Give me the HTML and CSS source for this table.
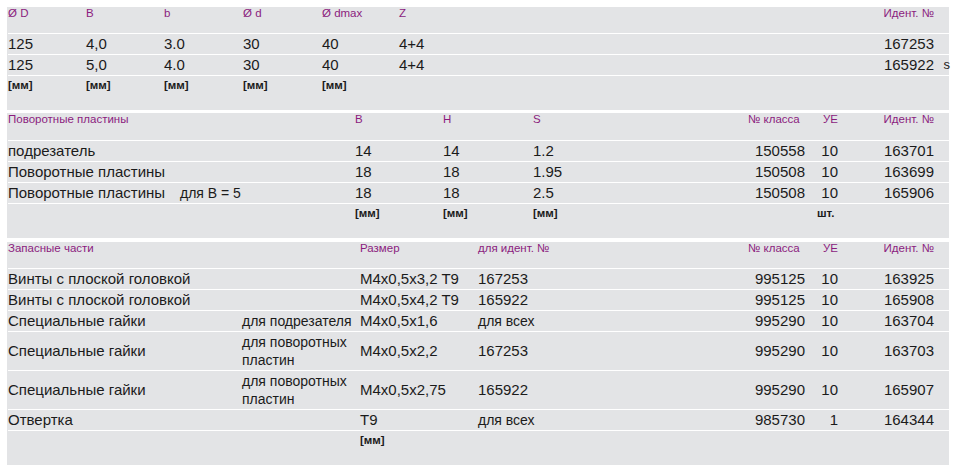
FILE: index.html
```html
<!DOCTYPE html>
<html lang="ru">
<head>
<meta charset="utf-8">
<title>Таблица</title>
<link rel="stylesheet" href="styles.css">
</head>
<body>
<div class="sheet">
  <div class="table t1">
    <div class="row head">
      <div>Ø D</div><div>B</div><div>b</div><div>Ø d</div><div>Ø dmax</div><div>Z</div><div class="id">Идент. №</div>
    </div>
    <div class="row data">
      <div>125</div><div>4,0</div><div>3.0</div><div>30</div><div>40</div><div>4+4</div><div class="id">167253</div>
    </div>
    <div class="row data">
      <div>125</div><div>5,0</div><div>4.0</div><div>30</div><div>40</div><div>4+4</div><div class="id mk">165922<span class="mark">s</span></div>
    </div>
    <div class="row units">
      <div>[мм]</div><div>[мм]</div><div>[мм]</div><div>[мм]</div><div>[мм]</div><div></div><div></div>
    </div>
  </div>

  <div class="table t2">
    <div class="row head">
      <div class="span2">Поворотные пластины</div><div>B</div><div>H</div><div>S</div><div class="cls-h">№ класса</div><div class="ue">УЕ</div><div class="id">Идент. №</div>
    </div>
    <div class="row data">
      <div>подрезатель</div><div></div><div>14</div><div>14</div><div>1.2</div><div class="cls">150558</div><div class="ue">10</div><div class="id">163701</div>
    </div>
    <div class="row data">
      <div>Поворотные пластины</div><div></div><div>18</div><div>18</div><div>1.95</div><div class="cls">150508</div><div class="ue">10</div><div class="id">163699</div>
    </div>
    <div class="row data">
      <div>Поворотные пластины</div><div class="note">для B = 5</div><div>18</div><div>18</div><div>2.5</div><div class="cls">150508</div><div class="ue">10</div><div class="id">165906</div>
    </div>
    <div class="row units">
      <div></div><div></div><div>[мм]</div><div>[мм]</div><div>[мм]</div><div></div><div class="pcs">шт.</div><div></div>
    </div>
  </div>

  <div class="table t3">
    <div class="row head">
      <div class="span2">Запасные части</div><div>Размер</div><div>для идент. №</div><div class="cls-h">№ класса</div><div class="ue">УЕ</div><div class="id">Идент. №</div>
    </div>
    <div class="row data">
      <div>Винты с плоской головкой</div><div></div><div>M4x0,5x3,2 T9</div><div>167253</div><div class="cls">995125</div><div class="ue">10</div><div class="id">163925</div>
    </div>
    <div class="row data">
      <div>Винты с плоской головкой</div><div></div><div>M4x0,5x4,2 T9</div><div>165922</div><div class="cls">995125</div><div class="ue">10</div><div class="id">165908</div>
    </div>
    <div class="row data">
      <div>Специальные гайки</div><div class="note">для подрезателя</div><div>M4x0,5x1,6</div><div class="note">для всех</div><div class="cls">995290</div><div class="ue">10</div><div class="id">163704</div>
    </div>
    <div class="row data tall">
      <div>Специальные гайки</div><div class="note">для поворотных пластин</div><div>M4x0,5x2,2</div><div>167253</div><div class="cls">995290</div><div class="ue">10</div><div class="id">163703</div>
    </div>
    <div class="row data tall">
      <div>Специальные гайки</div><div class="note">для поворотных пластин</div><div>M4x0,5x2,75</div><div>165922</div><div class="cls">995290</div><div class="ue">10</div><div class="id">165907</div>
    </div>
    <div class="row data">
      <div>Отвертка</div><div></div><div>T9</div><div class="note">для всех</div><div class="cls">985730</div><div class="ue">1</div><div class="id">164344</div>
    </div>
    <div class="row units">
      <div></div><div></div><div>[мм]</div><div></div><div></div><div></div><div></div>
    </div>
  </div>
</div>
</body>
</html>
```

FILE: styles.css
```css
* {
  box-sizing: border-box;
}

body {
  margin: 0;
  background: #ffffff;
  font-family: "Liberation Sans", Arial, sans-serif;
  color: #1b1b1b;
}

.sheet {
  width: 949px;
  padding: 7px 0 0 7px;
  display: flex;
  flex-direction: column;
}

.table {
  background: #e3e4e6;
  padding-left: 1px;
}

.t1 {
  margin-bottom: 3px;
}

.t2 {
  margin-bottom: 4px;
}

.row {
  display: grid;
  border-bottom: 1px solid #ffffff;
}

.t1 .row {
  grid-template-columns: 78px 78px 79px 79px 77px 1fr 109px;
}

.t2 .row {
  grid-template-columns: 172px 175px 88px 90px 1fr 64px 28px 109px;
}

.t3 .row {
  grid-template-columns: 234px 118px 118px 1fr 64px 28px 109px;
}

.span2 {
  grid-column: span 2;
}

.head {
  height: 27px;
  padding-top: 0;
  font-size: 11.5px;
  line-height: 12px;
  color: #8b1c7e;
  align-items: start;
}

.t2 .head {
  height: 28px;
}

.data {
  height: 21px;
  font-size: 15px;
  line-height: 20px;
  align-items: center;
  white-space: nowrap;
}

.data.tall {
  height: 39px;
}

.note {
  font-size: 14px;
  line-height: 16px;
  white-space: normal;
}

.tall .note {
  line-height: 18px;
}

.units {
  height: 34px;
  border-bottom: none;
  padding-top: 2px;
  font-size: 11.5px;
  font-weight: bold;
  line-height: 14px;
  align-items: start;
}

.id {
  text-align: right;
  padding-right: 15px;
}

.cls {
  text-align: right;
  padding-right: 7px;
}

.cls-h {
  text-align: left;
}

.ue {
  text-align: right;
  padding-right: 2px;
}

.pcs {
  padding-left: 5px;
}

.mk {
  position: relative;
}

.mark {
  position: absolute;
  right: -1px;
  top: 0;
  font-size: 13px;
}
```
